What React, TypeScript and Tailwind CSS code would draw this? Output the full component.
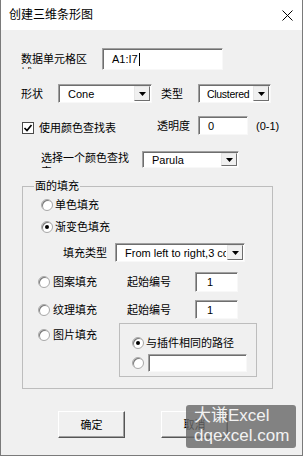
import React from "react";

const sunken =
  "bg-white border border-t-[#a0a0a0] border-l-[#a0a0a0] border-b-[#f8f8f8] border-r-[#f8f8f8] shadow-[inset_1px_1px_0_#6e6e6e]";

const TextBox = ({ value, className, cursor }: { value: string; className: string; cursor?: boolean }) => (
  <div className={`${sunken} flex items-center pl-[9px] ${className}`}>
    <span>{value}</span>
    {cursor && <span className="ml-[1px] w-[1px] h-[13px] bg-black" />}
  </div>
);

const Combo = ({ value, className, textClass }: { value: string; className: string; textClass?: string }) => (
  <div className={`${sunken} flex items-stretch ${className}`}>
    <div className={`flex-1 min-w-0 overflow-hidden whitespace-nowrap flex items-center ${textClass ?? "pl-[9px]"}`}>{value}</div>
    <div className="w-[16px] m-[1px] bg-[#f0f0f0] border border-t-[#e6e6e6] border-l-[#e6e6e6] border-b-[#6e6e6e] border-r-[#6e6e6e] flex items-center justify-center">
      <svg width="7" height="4" viewBox="0 0 7 4">
        <path d="M0 0 H7 L3.5 4 Z" fill="#000" />
      </svg>
    </div>
  </div>
);

const Radio = ({ checked }: { checked?: boolean }) => (
  <div className="w-[12px] h-[12px] shrink-0 rounded-full bg-white border border-[#a8a8a8] shadow-[inset_1px_1px_0_#7a7a7a] flex items-center justify-center">
    {checked && <div className="w-[4px] h-[4px] rounded-full bg-black" />}
  </div>
);

const Checkbox = () => (
  <div className="w-[12px] h-[12px] shrink-0 bg-white border border-[#4a4a4a] flex items-center justify-center">
    <svg width="10" height="10" viewBox="0 0 10 10">
      <path d="M1.5 5 L4 7.5 L8.5 2" stroke="#000" strokeWidth="1.7" fill="none" />
    </svg>
  </div>
);

const Button = ({ label, className }: { label: string; className?: string }) => (
  <div
    className={`w-[67px] h-[27px] bg-[#f0f0f0] border border-t-white border-l-white border-b-[#555] border-r-[#555] shadow-[inset_-1px_-1px_0_#a0a0a0] flex items-center justify-center ${className ?? ""}`}
  >
    {label}
  </div>
);

const App = () => {
  return (
    <div className="relative w-[303px] h-[456px] overflow-hidden bg-[#f0f0f0] border-x border-b border-[#7a7a7a] text-[11px] leading-[14px] text-black font-['Liberation_Sans','Noto_Sans_CJK_SC',sans-serif]">
      {/* title bar */}
      <div className="h-[30px] bg-white flex items-center justify-between pl-[8px] pr-[9px]">
        <span className="text-[12px]">创建三维条形图</span>
        <svg width="11" height="11" viewBox="0 0 11 11">
          <path d="M0.5 0.5 L10.5 10.5 M10.5 0.5 L0.5 10.5" stroke="#000" strokeWidth="1" />
        </svg>
      </div>

      {/* data range */}
      <div className="mt-[18px] h-[22px] flex pl-[20px]">
        <div className="w-[70px] h-[17px] mt-[4px] overflow-hidden">数据单元格区域</div>
        <TextBox value="A1:I7" cursor className="ml-[11px] w-[121px] h-[22px]" />
      </div>

      {/* shape / type */}
      <div className="mt-[14px] h-[19px] flex items-center pl-[20px]">
        <div className="w-[37px]">形状</div>
        <Combo value="Cone" className="w-[94px] h-[19px]" />
        <div className="ml-[9px] w-[37px]">类型</div>
        <Combo value="Clustered" className="w-[73px] h-[19px]" textClass="pl-[8px] text-[10.5px] tracking-[-0.3px]" />
      </div>

      {/* color lookup + transparency */}
      <div className="mt-[13px] h-[19px] flex items-center pl-[21px]">
        <div className="flex items-center mt-[4px]">
          <Checkbox />
          <div className="ml-[5px] w-[118px]">使用颜色查找表</div>
        </div>
        <div className="w-[41px]">透明度</div>
        <TextBox value="0" className="w-[50px] h-[19px]" />
        <div className="ml-[8px]">(0-1)</div>
      </div>

      <div className="mt-[16px] h-[17px] flex pl-[40px]">
        <div className="w-[92px] h-[17px] overflow-hidden">选择一个颜色查找表</div>
        <Combo value="Parula" className="ml-[9px] w-[97px] h-[17px]" />
      </div>

      {/* fill group */}
      <div className="relative mt-[18px] ml-[21px] w-[251px] h-[203px] border border-[#bdbdbd]">
        <div className="absolute left-[11px] top-[-8px] px-[1px] bg-[#f0f0f0]">面的填充</div>

        <div className="mt-[10px] h-[16px] flex items-center pl-[18px]">
          <Radio />
          <div className="ml-[2px]">单色填充</div>
        </div>

        <div className="mt-[6px] h-[16px] flex items-center pl-[18px]">
          <Radio checked />
          <div className="ml-[2px]">渐变色填充</div>
        </div>

        <div className="mt-[8px] h-[19px] flex items-center pl-[40px]">
          <div className="w-[52px]">填充类型</div>
          <Combo value="From left to right,3 colors" className="w-[130px] h-[19px]" />
        </div>

        <div className="mt-[10px] h-[20px] flex items-center pl-[15px]">
          <Radio />
          <div className="ml-[3px] w-[74px]">图案填充</div>
          <div className="w-[68px]">起始编号</div>
          <TextBox value="1" className="w-[43px] h-[20px] pl-[11px]" />
        </div>

        <div className="mt-[8px] h-[19px] flex items-center pl-[15px]">
          <Radio />
          <div className="ml-[3px] w-[74px]">纹理填充</div>
          <div className="w-[68px]">起始编号</div>
          <TextBox value="1" className="w-[43px] h-[19px] pl-[11px]" />
        </div>

        <div className="mt-[4px] flex pl-[15px]">
          <div className="mt-[4px] h-[16px] flex items-center">
            <Radio />
            <div className="ml-[3px] w-[66px]">图片填充</div>
          </div>
          <div className="w-[138px] h-[54px] border border-[#bdbdbd]">
            <div className="mt-[11px] h-[16px] flex items-center pl-[12px]">
              <Radio checked />
              <div className="ml-[2px]">与插件相同的路径</div>
            </div>
            <div className="mt-[3px] h-[18px] flex items-center pl-[12px]">
              <Radio />
              <TextBox value="" className="ml-[4px] w-[99px] h-[18px]" />
            </div>
          </div>
        </div>
      </div>

      {/* buttons */}
      <div className="mt-[22px] flex pl-[57px]">
        <Button label="确定" />
        <Button label="取消" className="ml-[36px]" />
      </div>

      {/* watermark */}
      <div className="absolute left-[185px] top-[405px] w-[110px] h-[43px] rounded-[3px] bg-[#666666]/80 pl-[8px] pt-[1px] text-[17px] leading-[20px] text-[#f2f2f2]">
        <div>大谦Excel</div>
        <div>dqexcel.com</div>
      </div>
    </div>
  );
};

export default App;
